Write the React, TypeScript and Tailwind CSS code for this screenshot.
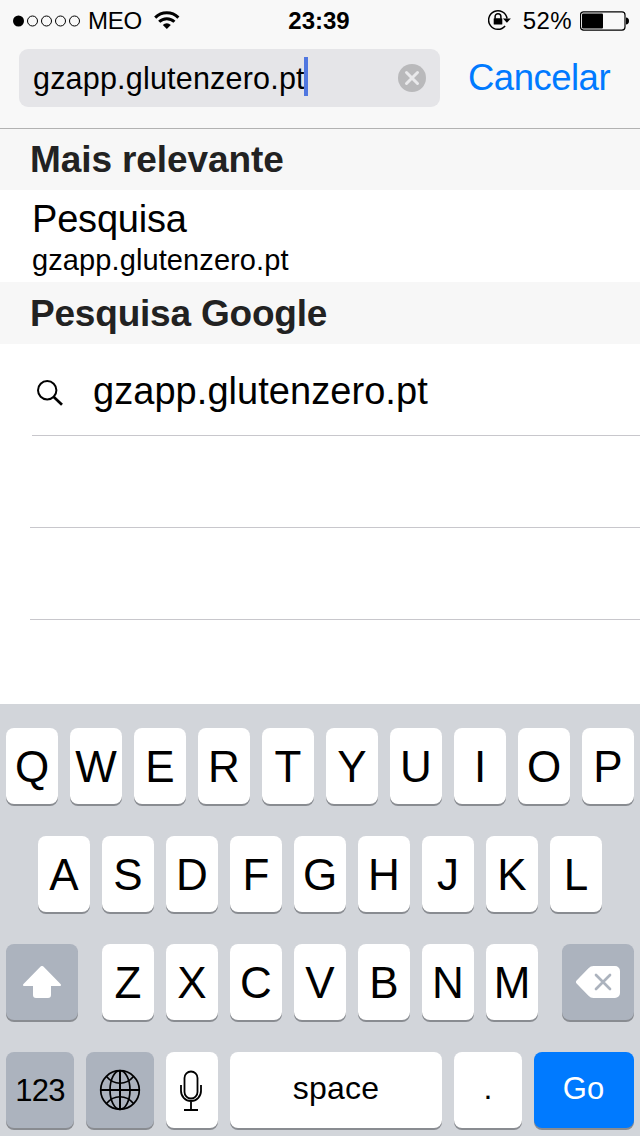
import type { ReactNode } from "react"
import clsx from "clsx"

const SUGGESTION = "gzapp.glutenzero.pt"

function StatusBar() {
  return (
    <div className="grid h-[41px] grid-cols-[1fr_auto_1fr] items-center pl-[13px] pr-[11px] text-[24px] leading-[41px]">
      <div className="flex items-center">
        <svg width="68" height="12" viewBox="0 0 68 12" fill="none" stroke="#000">
          <circle cx="5.5" cy="6" r="5.5" fill="#000" stroke="none" />
          <circle cx="19.5" cy="6" r="5" />
          <circle cx="33.5" cy="6" r="5" />
          <circle cx="47.5" cy="6" r="5" />
          <circle cx="61.5" cy="6" r="5" />
        </svg>
        <span className="ml-[7px] w-[66px] tracking-[-0.2px]">MEO</span>
        <svg className="-mt-px" width="26" height="18" viewBox="0 0 26 18" fill="none" stroke="#000" strokeWidth="3">
          <path d="M1.2 6.6a16.6 16.6 0 0 1 23.2 0" />
          <path d="M5.2 10.8a10.8 10.8 0 0 1 15.2 0" />
          <path d="M12.8 18 8.8 13.9a5.7 5.7 0 0 1 8 0z" fill="#000" stroke="none" />
        </svg>
      </div>
      <span className="-ml-1 font-bold">23:39</span>
      <div className="flex items-center justify-end">
        <svg className="-mt-px" width="24" height="22" viewBox="0 0 24 22" fill="none" stroke="#000">
          <path d="M19.1 9.5A9.3 9.3 0 1 0 17.1 17" strokeWidth="1.5" />
          <path d="M14.9 9.500h8l-4 4.300z" fill="#000" stroke="none" />
          <path d="M7.1 9.8V7.6a2.9 2.9 0 0 1 5.8 0v2.2" strokeWidth="1.5" />
          <rect x="5.7" y="9.2" width="8.6" height="6.4" rx=".6" fill="#000" stroke="none" />
        </svg>
        <span className="ml-[11px] tracking-[0.4px]">52%</span>
        <svg className="ml-[8px]" width="49" height="20" viewBox="0 0 49 20" fill="none">
          <rect x=".5" y=".9" width="44.5" height="18.2" rx="3" stroke="#000" strokeWidth="1.2" />
          <rect x="2" y="2.5" width="21" height="15" rx="1" fill="#000" />
          <path d="M46 6.5c1.8 0 3 1.3 3 3.5s-1.2 3.5-3 3.5z" fill="#000" />
        </svg>
      </div>
    </div>
  )
}

function AddressBar() {
  return (
    <div className="flex items-center pl-[19px] pt-2">
      <div className="flex h-[58px] w-[421px] items-center rounded-[9px] bg-[#e5e5e8] px-[14px]">
        <span className="-mt-px text-[30.5px] leading-[58px] tracking-[0.2px]">{SUGGESTION}</span>
        <span className="-ml-px -mt-[3px] h-[39px] w-1 shrink-0 bg-[#5077e0]" />
        <svg className="ml-auto" width="28" height="28" viewBox="0 0 28 28">
          <circle cx="14" cy="14" r="14" fill="#b9b9bb" />
          <path d="m8.5 8.5 11 11m0-11-11 11" stroke="#e9e9eb" strokeWidth="3" strokeLinecap="round" />
        </svg>
      </div>
      <button className="ml-7 text-[36.5px] leading-[58px] tracking-[-0.5px] text-[#007aff]">Cancelar</button>
    </div>
  )
}

function SectionTitle({ className, children }: { className?: string; children: ReactNode }) {
  return (
    <h2 className={clsx("flex items-center bg-[#f7f7f7] pl-[30px] text-[37px] font-bold text-[#222]", className)}>
      {children}
    </h2>
  )
}

function Results() {
  return (
    <div className="h-[575px]">
      <SectionTitle className="h-[61px] tracking-[-0.1px]">Mais relevante</SectionTitle>
      <div className="h-[92px] pl-8 pt-1">
        <p className="text-[38px] leading-[50px] tracking-[-0.2px]">Pesquisa</p>
        <p className="pt-px text-[29px] leading-[30px] tracking-[0.1px]">{SUGGESTION}</p>
      </div>
      <SectionTitle className="h-[62px] pt-0.5 tracking-[-0.2px]">Pesquisa Google</SectionTitle>
      <div className="ml-8 flex h-[92px] items-center border-b border-[#c8c7cc]">
        <svg className="ml-[4px] mt-[7px]" width="28" height="28" viewBox="0 0 28 28" fill="none" stroke="#000">
          <circle cx="11.2" cy="11.3" r="9.2" strokeWidth="2" />
          <path d="m17.8 18 8.2 7.8" strokeWidth="2.7" />
        </svg>
        <span className="ml-[29px] pt-[3px] text-[38px] leading-[88px] tracking-[0.05px]">{SUGGESTION}</span>
      </div>
      <div className="ml-[30px] h-[92px] border-b border-[#c8c7cc]" />
      <div className="ml-[30px] h-[92px] border-b border-[#c8c7cc]" />
    </div>
  )
}

function Key({ className, children }: { className?: string; children?: ReactNode }) {
  return (
    <button
      className={clsx(
        "flex h-[76px] shrink-0 items-center justify-center rounded-[8px] shadow-[0_2px_0_#898c91]",
        className
      )}
    >
      {children}
    </button>
  )
}

function Letters({ keys }: { keys: string }) {
  return (
    <div className="flex justify-center gap-3">
      {keys.split("").map((letter) => (
        <Key key={letter} className="w-[52px] bg-white pt-px text-[44px]">
          {letter}
        </Key>
      ))}
    </div>
  )
}

function Keyboard() {
  return (
    <div className="flex h-[432px] flex-col gap-8 bg-[#d2d5da] px-[6px] pt-6">
      <Letters keys="QWERTYUIOP" />
      <Letters keys="ASDFGHJKL" />
      <div className="flex justify-between">
        <Key className="w-[72px] bg-[#acb3be]">
          <svg width="38" height="32" viewBox="0 0 38 32" fill="#fff">
            <path d="M17.6.6a2 2 0 0 1 2.8 0L37.5 18c.9.9.5 2-.8 2H28v9a3 3 0 0 1-3 3H13a3 3 0 0 1-3-3v-9H1.3C0 20-.4 18.9.5 18z" />
          </svg>
        </Key>
        <Letters keys="ZXCVBNM" />
        <Key className="w-[72px] bg-[#acb3be]">
          <svg width="44" height="32" viewBox="0 0 44 32" fill="#fff">
            <path d="M.6 17.4a2 2 0 0 1 0-2.8L12.5 2.2Q14.5 0 17.5 0H39a5 5 0 0 1 5 5v22a5 5 0 0 1-5 5H17.5q-3 0-5-2.2z" />
            <path d="m20 9 14 14m0-14L20 23" stroke="#acb3be" strokeWidth="2.7" strokeLinecap="round" />
          </svg>
        </Key>
      </div>
      <div className="flex gap-3">
        <Key className="w-[68px] bg-[#acb3be] pt-[3px] text-[31px] tracking-[-0.8px]">123</Key>
        <Key className="w-[68px] bg-[#acb3be]">
          <svg width="42" height="42" viewBox="0 0 42 42" fill="none" stroke="#000" strokeWidth="1.7">
            <circle cx="21" cy="21" r="19.3" />
            <ellipse cx="21" cy="21" rx="10" ry="19.3" />
            <path d="M21 1.5v39M1.5 21h39" strokeWidth="2" />
            <path d="M7.5 7.5c7.5 9 19.5 9 27 0M7.5 34.5c7.5-9 19.5-9 27 0" />
          </svg>
        </Key>
        <Key className="w-[52px] bg-white">
          <svg className="-ml-0.5" width="24" height="42" viewBox="0 0 24 42" fill="none" stroke="#000" strokeWidth="1.8">
            <rect x="5.5" y="2.5" width="13" height="27" rx="6.5" />
            <path d="M2 16v6a10 10 0 0 0 20 0v-6M12 32v9M5 41h14" />
          </svg>
        </Key>
        <Key className="w-[212px] bg-white pb-[5px] text-[32px] tracking-[0.2px]">space</Key>
        <Key className="w-[68px] bg-white pb-[5px] text-[32px]">.</Key>
        <Key className="w-[100px] bg-[#007aff] pb-0.5 pr-px text-[31px] text-white">Go</Key>
      </div>
    </div>
  )
}

export default function App() {
  return (
    <div className="h-[1136px] w-[640px] overflow-hidden bg-white font-['Liberation_Sans',Arial,sans-serif] text-black">
      <header className="h-[129px] border-b border-[#b2b2b2] bg-[#f8f8f8]">
        <StatusBar />
        <AddressBar />
      </header>
      <Results />
      <Keyboard />
    </div>
  )
}
